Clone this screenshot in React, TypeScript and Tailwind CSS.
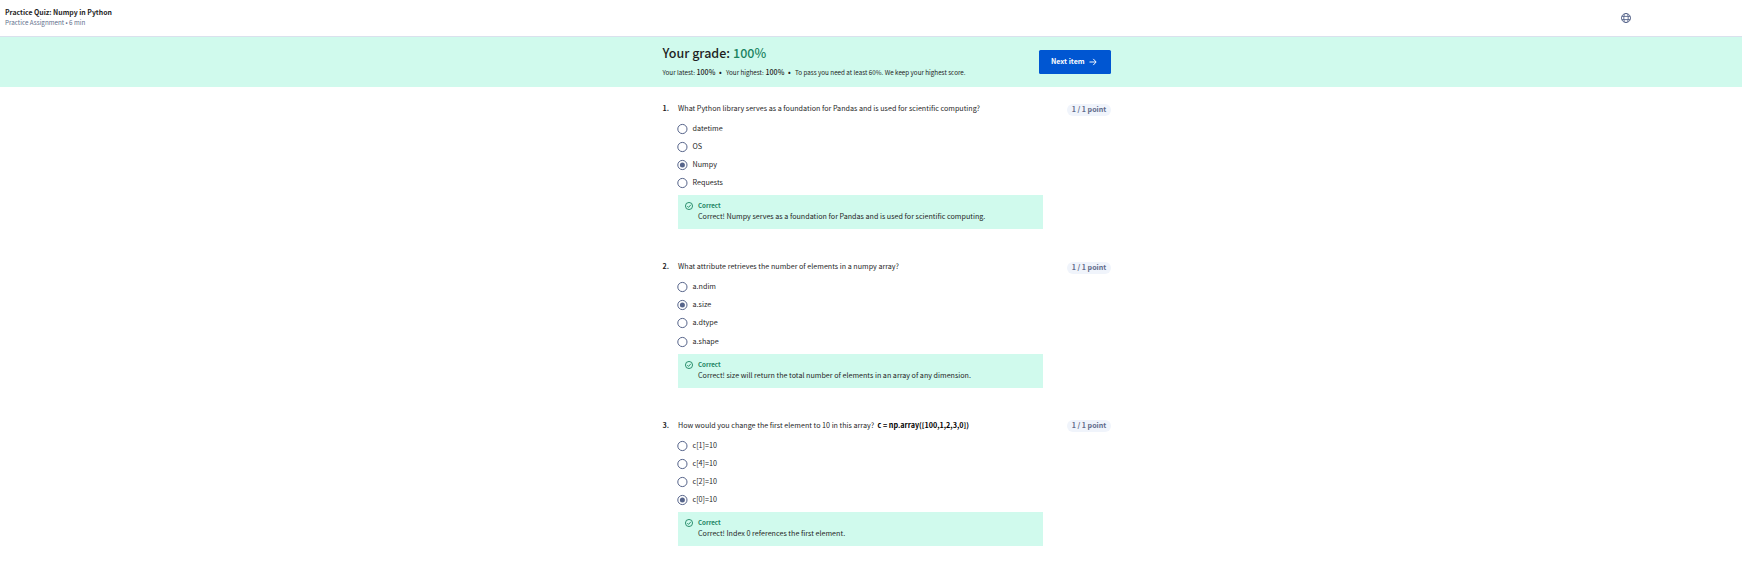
import type { ReactNode } from "react";

type Question = {
  prompt: ReactNode;
  options: string[];
  selected: number;
  feedback: string;
  height: string;
  pill: string;
  lastGap?: boolean;
};

const questions: Question[] = [
  {
    prompt: "What Python library serves as a foundation for Pandas and is used for scientific computing?",
    options: ["datetime", "OS", "Numpy", "Requests"],
    selected: 2,
    feedback: "Correct! Numpy serves as a foundation for Pandas and is used for scientific computing.",
    height: "h-[158px]",
    pill: "mt-[2px]",
  },
  {
    prompt: "What attribute retrieves the number of elements in a numpy array?",
    options: ["a.ndim", "a.size", "a.dtype", "a.shape"],
    selected: 1,
    feedback: "Correct! size will return the total number of elements in an array of any dimension.",
    height: "h-[159px]",
    pill: "mt-[2px]",
    lastGap: true,
  },
  {
    prompt: (
      <>
        How would you change the first element to 10 in this array?
        <b className="ml-[3.5px] text-[7.2px] font-bold text-black">c = np.array([100,1,2,3,0])</b>
      </>
    ),
    options: ["c[1]=10", "c[4]=10", "c[2]=10", "c[0]=10"],
    selected: 3,
    feedback: "Correct! Index 0 references the first element.",
    height: "h-[159px]",
    pill: "mt-px",
  },
];

function GlobeIcon() {
  return (
    <svg className="size-[10px]" viewBox="0 0 20 20" fill="none" stroke="#56648a" strokeWidth="1.8">
      <circle cx="10" cy="10" r="9.1" />
      <ellipse cx="10" cy="10" rx="4.4" ry="9.1" />
      <path d="M1.8 6.8h16.4M1.8 13.2h16.4" />
    </svg>
  );
}

function CheckIcon() {
  return (
    <svg className="size-[8px] shrink-0" viewBox="0 0 16 16" fill="none" stroke="#1b8461" strokeWidth="1.8">
      <circle cx="8" cy="8" r="7.1" />
      <path d="M4.6 8.3l2.5 2.5 4.6-5.2" />
    </svg>
  );
}

function Radio({ checked }: { checked: boolean }) {
  return (
    <svg className="size-[10px] shrink-0 overflow-visible" viewBox="0 0 10 10" fill="none">
      <circle cx="5.4" cy="5" r="4.6" stroke="#56648a" strokeWidth="1" />
      {checked && <circle cx="5.4" cy="5" r="2.5" fill="#56648a" />}
    </svg>
  );
}

function QuestionBlock({ q, index }: { q: Question; index: number }) {
  return (
    <section className={`flex pt-[15px] ${q.height}`}>
      <span className="w-[15.5px] shrink-0 text-[7.16px] leading-[12px] font-bold">{index + 1}.</span>
      <div className="w-[366px] shrink-0">
        <p className="h-[18px] text-[7.165px] leading-[12px] whitespace-nowrap">{q.prompt}</p>
        <ul>
          {q.options.map((option, i) => (
            <li
              key={option}
              className={`flex h-[18px] items-center ${q.lastGap && i === 3 ? "mt-px" : ""}`}
            >
              <span className="-ml-px flex">
                <Radio checked={i === q.selected} />
              </span>
              <span className="-mt-[2px] ml-[5.5px] text-[7.2px] leading-[12px]">{option}</span>
            </li>
          ))}
        </ul>
        <div className="mt-[3px] flex h-[34px] w-[365px] bg-[#d0faed] pt-[7px] pl-[7px]">
          <CheckIcon />
          <div className="-mt-[2px] ml-[5px]">
            <p className="text-[6.2px] leading-[11px] font-bold text-[#1b8461]">Correct</p>
            <p className="text-[7.16px] leading-[11px] whitespace-nowrap">{q.feedback}</p>
          </div>
        </div>
      </div>
      <span
        className={`ml-auto flex h-[12px] w-[44px] shrink-0 justify-center rounded-full bg-[#f0f4fb] text-[7.08px] leading-[10px] font-bold whitespace-nowrap text-[#5f6b8a] ${q.pill}`}
      >
        1 / 1 point
      </span>
    </section>
  );
}

export default function App() {
  return (
    <div className="h-[579px] overflow-hidden bg-white font-['Noto_Sans_CJK_JP','Noto_Sans',sans-serif] text-[#1f1f1f]">
      <header className="flex h-[37px] justify-between border-b border-[#dae1ed] pt-[6px] pl-[5px]">
        <div>
          <h1 className="text-[6.9px] leading-[12px] font-bold">Practice Quiz: Numpy in Python</h1>
          <p className="text-[6.25px] leading-[9px] text-[#636f8c]">Practice Assignment • 6 min</p>
        </div>
        <div className="mt-[7px] mr-[111px]">
          <GlobeIcon />
        </div>
      </header>

      <div className="h-[50px] bg-[#d0faed]">
        <div className="ml-[662.5px] flex w-[448.5px] justify-between">
          <div className="pt-[6px]">
            <h2 className="flex text-[12.5px] leading-[20px] font-medium whitespace-nowrap">
              Your grade:<span className="ml-[3px] text-[#1b8461]">100%</span>
            </h2>
            <p className="mt-[4px] flex text-[6.28px] leading-[12px] whitespace-nowrap">
              <span className="w-[34px]">Your latest:</span>
              <span className="w-[22.5px] text-[7.1px] leading-[11px] font-medium">100%</span>
              <span className="w-[7px] text-[7.1px] leading-[11px] font-bold">•</span>
              <span className="w-[39.5px]">Your highest:</span>
              <span className="w-[22.5px] text-[7.1px] leading-[11px] font-medium">100%</span>
              <span className="w-[7px] text-[7.1px] leading-[11px] font-bold">•</span>
              <span>To pass you need at least 60%. We keep your highest score.</span>
            </p>
          </div>
          <button className="mt-[13px] flex h-[24px] w-[72px] items-center rounded-[1.5px] bg-[#0056d2] pl-[12px] text-left text-[7.1px] leading-[12px] font-bold whitespace-nowrap text-white">
            <span className="-mt-[2px] w-[38px]">Next item</span>
            <svg className="size-[8px]" viewBox="0 0 16 16" fill="none" stroke="white" strokeWidth="1.9">
              <path d="M1 8h13M8.5 1.8L14.3 8l-5.8 6.2" />
            </svg>
          </button>
        </div>
      </div>

      <main className="ml-[662.5px] w-[448.5px]">
        {questions.map((q, i) => (
          <QuestionBlock key={i} q={q} index={i} />
        ))}
      </main>
    </div>
  );
}
